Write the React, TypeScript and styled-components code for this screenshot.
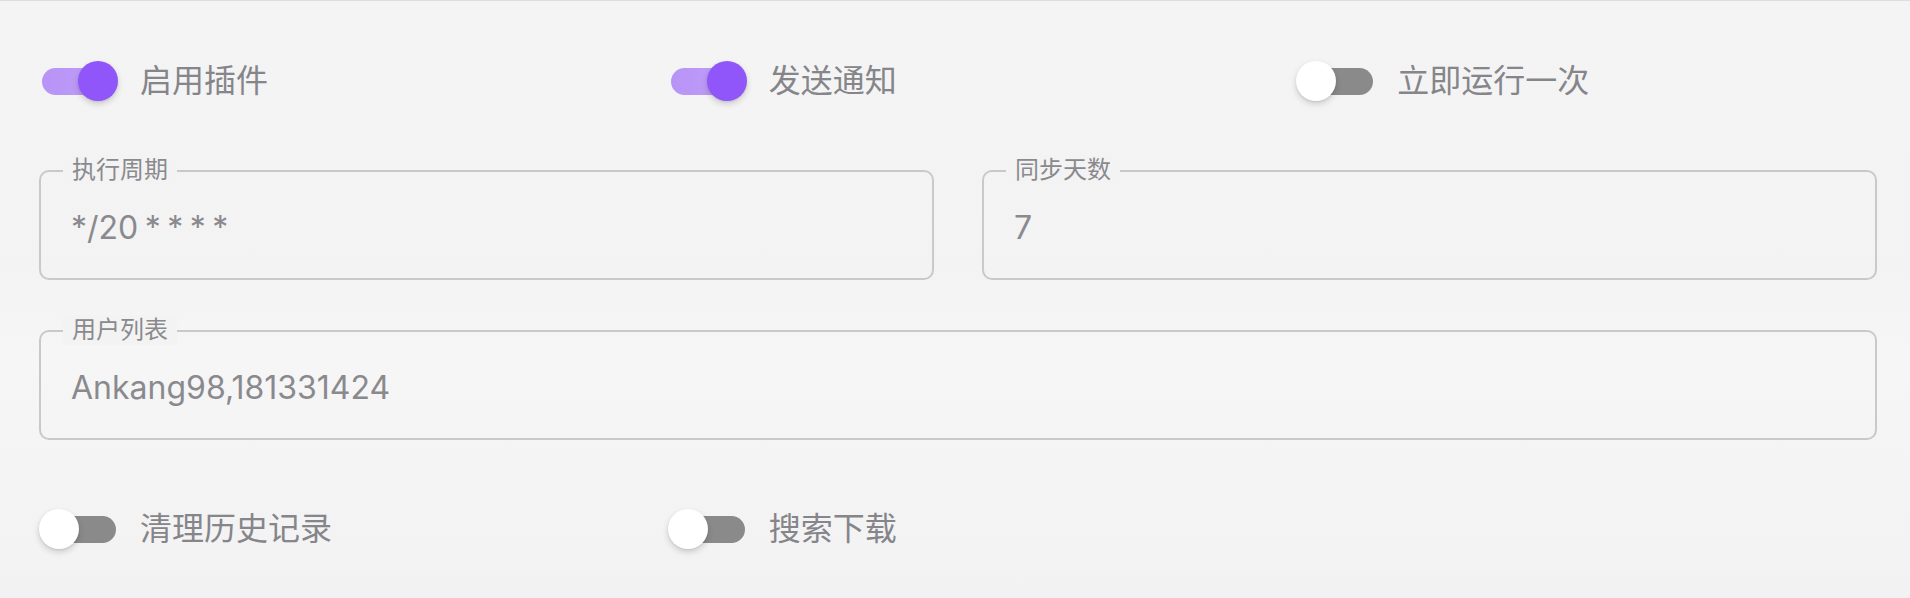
import React from "react";
import styled, { createGlobalStyle } from "styled-components";

const Global = createGlobalStyle`
  html, body { margin: 0; padding: 0; }
  body {
    background: #f3f3f4;
    font-family: Inter, "Noto Sans CJK SC", sans-serif;
    -webkit-font-smoothing: antialiased;
  }
`;

const Page = styled.div`
  box-sizing: border-box;
  width: 1910px;
  height: 598px;
  border-top: 1px solid #dedede;
  background: linear-gradient(180deg, #f4f4f5 0%, #f3f3f4 45%, #f6f6f7 60%, #f2f2f3 100%);
  padding: 60px 33px 0 39px;
  display: flex;
  flex-direction: column;
`;

const SwitchRow = styled.div<{ $top?: number }>`
  display: grid;
  grid-template-columns: repeat(3, 1fr);
  column-gap: 48px;
  height: 40px;
  margin-top: ${(p) => p.$top ?? 0}px;
`;

const FieldRow = styled.div<{ $cols: number; $top: number }>`
  display: grid;
  grid-template-columns: repeat(${(p) => p.$cols}, 1fr);
  column-gap: 48px;
  margin-top: ${(p) => p.$top}px;
`;

const ToggleItem = styled.label`
  display: flex;
  align-items: center;
  gap: 21px;
  height: 40px;
  cursor: pointer;
`;

const Track = styled.span<{ $on: boolean }>`
  position: relative;
  display: block;
  width: 80px;
  height: 40px;
  flex: none;
  &::before {
    content: "";
    position: absolute;
    left: 3px;
    right: 3px;
    top: 6.5px;
    height: 27px;
    border-radius: 14px;
    background: ${(p) =>
      p.$on ? "linear-gradient(90deg, #b793f6 0%, #c2a2f8 100%)" : "#8a8a8a"};
  }
`;

const Thumb = styled.span<{ $on: boolean }>`
  position: absolute;
  top: 0;
  left: ${(p) => (p.$on ? 39 : 0)}px;
  width: 40px;
  height: 40px;
  border-radius: 50%;
  background: ${(p) => (p.$on ? "#9056fa" : "#ffffff")};
  box-shadow: 0 3px 6px rgba(0, 0, 0, 0.16), 0 1px 2px rgba(0, 0, 0, 0.08);
`;

const ToggleText = styled.span`
  font-size: 32px;
  color: #85858a;
  line-height: 1;
  white-space: nowrap;
`;

const Field = styled.div`
  position: relative;
  box-sizing: border-box;
  height: 110px;
  border: 2px solid #c9c9cb;
  border-radius: 10px;
  display: flex;
  align-items: center;
  padding: 0 30px;
`;

const FieldLabel = styled.span`
  position: absolute;
  top: -17px;
  left: 22px;
  padding: 0 9px;
  font-size: 24px;
  line-height: 30px;
  color: #8a8a8e;
  background: #f3f3f4;
`;

const FieldValue = styled.span`
  font-size: 32px;
  color: #8a8a8e;
  line-height: 1;
  padding-top: 5px;
  word-spacing: -2.5px;
`;

function Toggle({ on, label }: { on: boolean; label: string }) {
  return (
    <ToggleItem>
      <Track $on={on}>
        <Thumb $on={on} />
      </Track>
      <ToggleText>{label}</ToggleText>
    </ToggleItem>
  );
}

function TextBox({ label, value }: { label: string; value: string }) {
  return (
    <Field>
      <FieldLabel>{label}</FieldLabel>
      <FieldValue>{value}</FieldValue>
    </Field>
  );
}

export default function App() {
  return (
    <>
      <Global />
      <Page>
        <SwitchRow>
          <Toggle on label="启用插件" />
          <Toggle on label="发送通知" />
          <Toggle on={false} label="立即运行一次" />
        </SwitchRow>
        <FieldRow $cols={2} $top={69}>
          <TextBox label="执行周期" value="*/20 * * * *" />
          <TextBox label="同步天数" value="7" />
        </FieldRow>
        <FieldRow $cols={1} $top={50}>
          <TextBox label="用户列表" value="Ankang98,181331424" />
        </FieldRow>
        <SwitchRow $top={69}>
          <Toggle on={false} label="清理历史记录" />
          <Toggle on={false} label="搜索下载" />
        </SwitchRow>
      </Page>
    </>
  );
}
